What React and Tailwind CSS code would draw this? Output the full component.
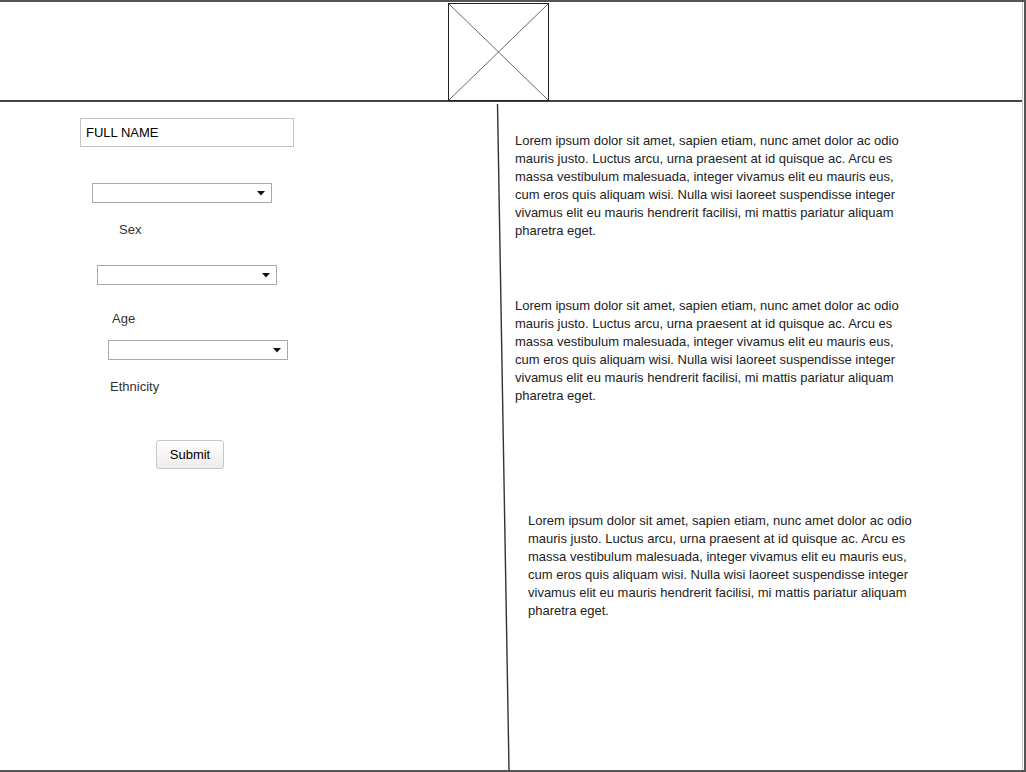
import React from 'react';

const Dropdown = ({ className = '' }) => (
  <div className={`relative w-[180px] h-[20px] border border-[#a9a9a9] bg-white ${className}`}>
    <svg className="absolute right-[6px] top-[7px]" width="8" height="5" viewBox="0 0 8 5">
      <polygon points="0,0 8,0 4,4.5" fill="#111" />
    </svg>
  </div>
);

const Label = ({ children, className = '' }) => (
  <div className={`text-[13px] leading-[16px] text-[#333] ${className}`}>{children}</div>
);

const LOREM =
  'Lorem ipsum dolor sit amet, sapien etiam, nunc amet dolor ac odio mauris justo. Luctus arcu, urna praesent at id quisque ac. Arcu es massa vestibulum malesuada, integer vivamus elit eu mauris eus, cum eros quis aliquam wisi. Nulla wisi laoreet suspendisse integer vivamus elit eu mauris hendrerit facilisi, mi mattis pariatur aliquam pharetra eget.';

const Paragraph = ({ className = '' }) => (
  <p className={`w-[400px] text-[13px] leading-[18px] text-[#222] ${className}`}>{LOREM}</p>
);

export default function App() {
  return (
    <div className="w-[1026px] h-[772px] flex bg-white border-t-2 border-r-2 border-b-2 border-[#555] font-['Liberation_Sans',Arial,sans-serif]">
      <div className="flex-1 mr-px flex flex-col border-r border-[#c8c8c8]">
        {/* Header with image placeholder */}
        <div className="h-[100px] flex justify-center border-b-2 border-[#444]">
          <div className="ml-[-26px] mt-px w-[101px] h-[98px] border border-[#222]">
            <svg width="99" height="96" viewBox="0 0 99 96" className="block">
              <line x1="0" y1="0" x2="99" y2="96" stroke="#444" strokeWidth="0.8" />
              <line x1="99" y1="0" x2="0" y2="96" stroke="#444" strokeWidth="0.8" />
            </svg>
          </div>
        </div>

        {/* Body */}
        <div className="relative flex-1 flex">
          {/* Form column */}
          <div className="w-[497px] pt-[16px] flex flex-col items-start">
            <div className="ml-[80px] w-[214px] h-[29px] border border-[#c4c4c4] flex items-center pl-[5px] text-[13px] text-black">
              FULL NAME
            </div>
            <Dropdown className="ml-[92px] mt-[36px]" />
            <Label className="ml-[119px] mt-[19px]">Sex</Label>
            <Dropdown className="ml-[97px] mt-[27px]" />
            <Label className="ml-[112px] mt-[26px]">Age</Label>
            <Dropdown className="ml-[108px] mt-[13px]" />
            <Label className="ml-[110px] mt-[19px]">Ethnicity</Label>
            <button className="ml-[156px] mt-[45px] w-[68px] h-[29px] rounded-[3px] border border-[#c6c6c6] bg-gradient-to-b from-white to-[#ececec] text-[13px] text-black">
              Submit
            </button>
          </div>

          {/* Text column */}
          <div className="flex-1 pt-[30px] flex flex-col">
            <Paragraph className="ml-[18px]" />
            <Paragraph className="ml-[18px] mt-[57px]" />
            <Paragraph className="ml-[31px] mt-[107px]" />
          </div>

          {/* Hand-drawn divider */}
          <svg className="absolute inset-0 pointer-events-none" width="1023" height="668">
            <line x1="497.5" y1="2" x2="509" y2="668" stroke="#333" strokeWidth="1.4" />
          </svg>
        </div>
      </div>
    </div>
  );
}
